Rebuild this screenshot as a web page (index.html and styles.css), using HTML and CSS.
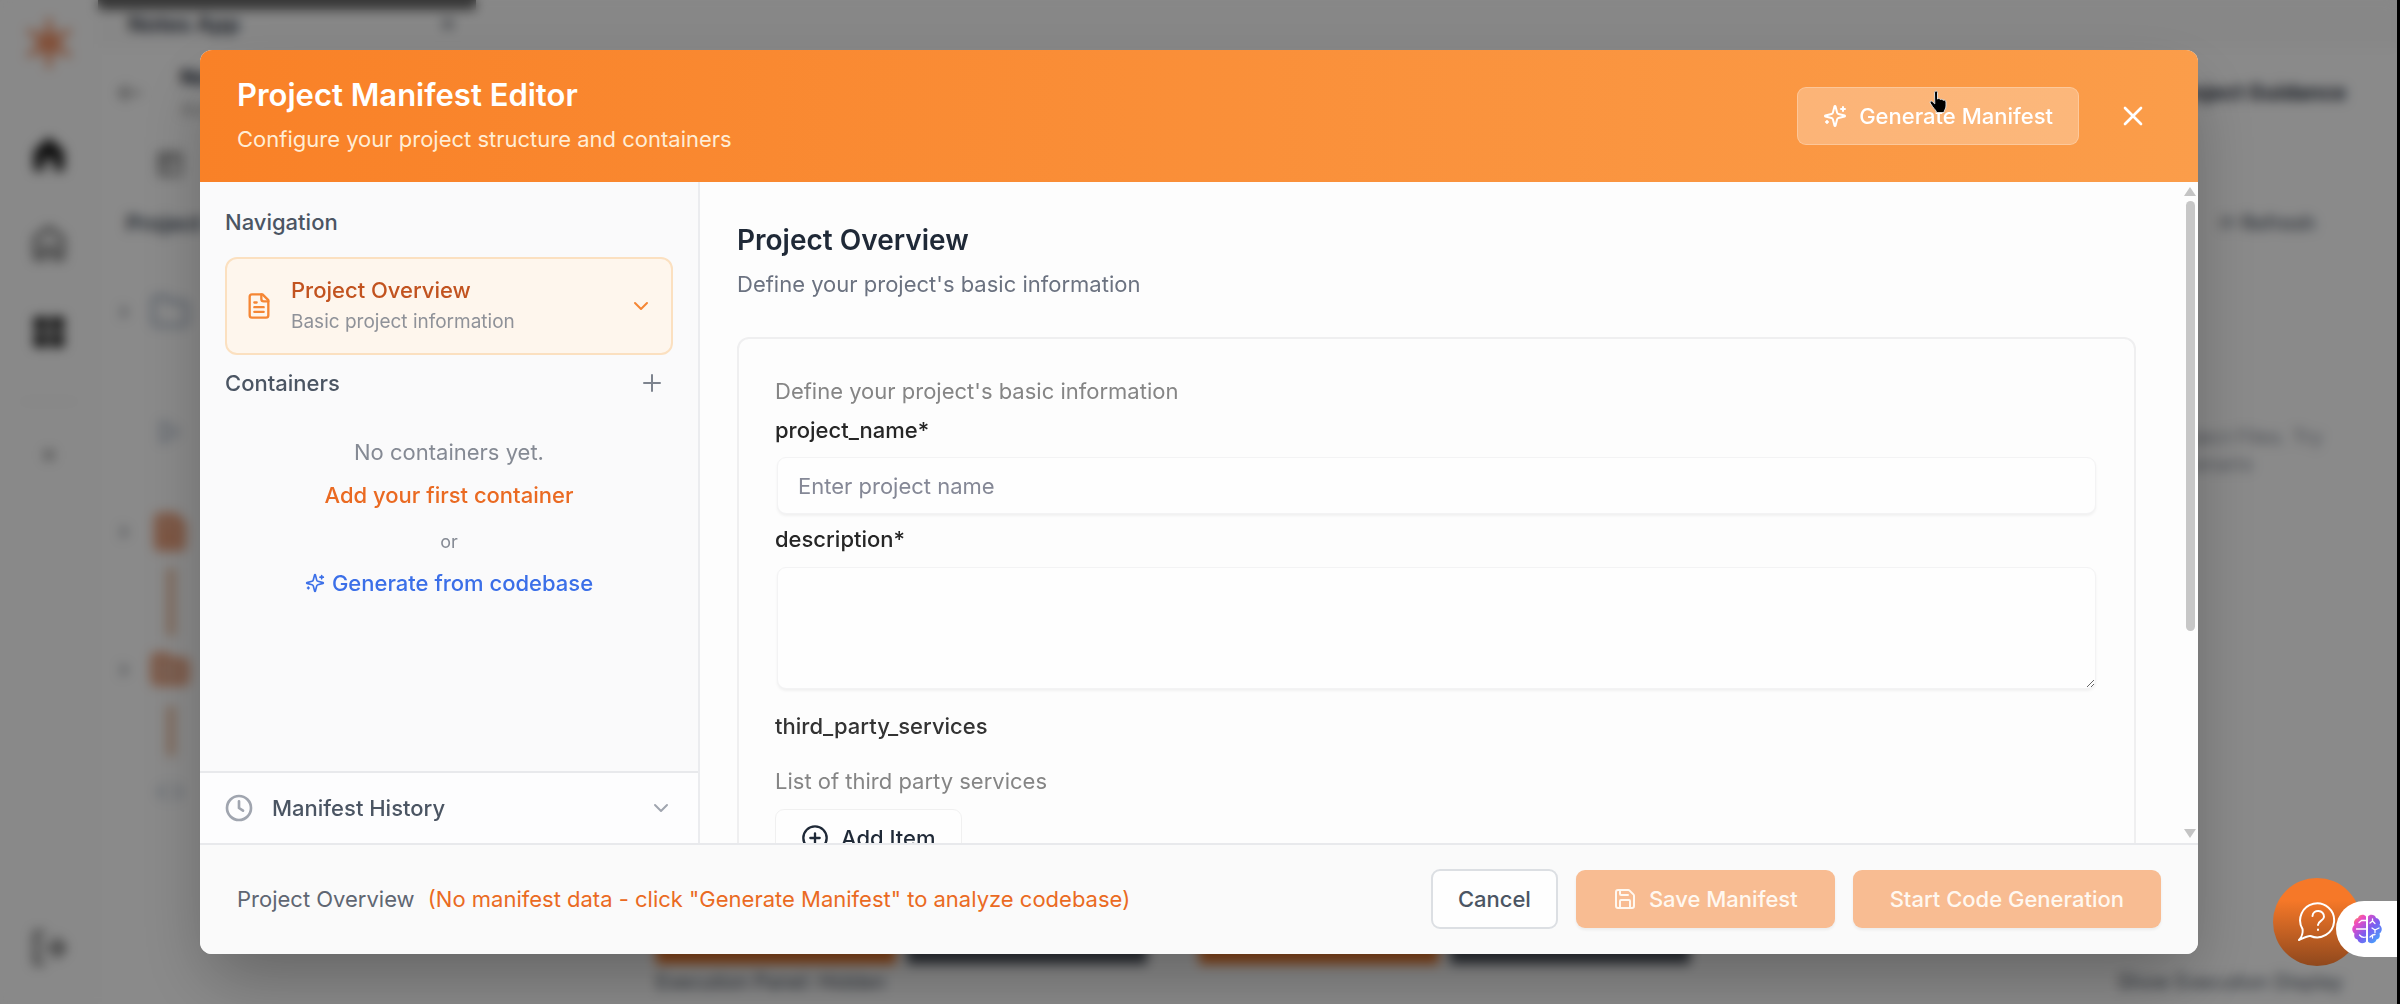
FILE: index.html
```html
<!DOCTYPE html>
<html lang="en">
<head>
<meta charset="utf-8">
<meta name="viewport" content="width=device-width, initial-scale=1">
<title>Project Manifest Editor</title>
<link rel="stylesheet" href="styles.css">
</head>
<body>
<svg class="sprite" aria-hidden="true">
  <symbol id="sparkles" viewBox="0 0 24 24"><path d="M9.937 15.5A2 2 0 0 0 8.5 14.063l-6.135-1.582a.5.5 0 0 1 0-.962L8.5 9.936A2 2 0 0 0 9.937 8.5l1.582-6.135a.5.5 0 0 1 .963 0L14.063 8.5A2 2 0 0 0 15.5 9.937l6.135 1.581a.5.5 0 0 1 0 .964L15.5 14.063a2 2 0 0 0-1.437 1.437l-1.582 6.135a.5.5 0 0 1-.963 0z"/><path d="M20 3v4M22 5h-4M4 17v2M5 18H3"/></symbol>
  <symbol id="chevron" viewBox="0 0 24 24"><path d="m6 9 6 6 6-6"/></symbol>
  <symbol id="chevron-right" viewBox="0 0 24 24"><path d="m9 6 6 6-6 6"/></symbol>
  <symbol id="cross" viewBox="0 0 24 24"><path d="M18 6 6 18M6 6l12 12"/></symbol>
  <symbol id="file" viewBox="0 0 24 24"><path d="M15 2H6a2 2 0 0 0-2 2v16a2 2 0 0 0 2 2h12a2 2 0 0 0 2-2V7Z"/><path d="M14 2v4a2 2 0 0 0 2 2h4M10 9H8M16 13H8M16 17H8"/></symbol>
  <symbol id="folder" viewBox="0 0 24 24"><path d="M20 20a2 2 0 0 0 2-2V8a2 2 0 0 0-2-2h-8l-2-3H4a2 2 0 0 0-2 2v13a2 2 0 0 0 2 2Z"/></symbol>
</svg>

<div class="app" aria-hidden="true">
  <nav class="rail">
    <svg class="rail-logo" viewBox="0 0 48 48"><path d="M24 4v40M7 14l34 20M41 14 7 34"/><circle cx="24" cy="24" r="8"/></svg>
    <svg class="rail-icon home" viewBox="0 0 24 24"><path d="M12 2 3 10v12h6v-7h6v7h6V10z"/></svg>
    <svg class="rail-icon line" viewBox="0 0 24 24"><path d="M4 21V9l8-6 8 6v12h-5v-6H9v6z"/></svg>
    <svg class="rail-icon tiles" viewBox="0 0 24 24"><path d="M3 3h8v8H3zM13 3h8v8h-8zM3 13h8v8H3zM13 13h8v8h-8z"/></svg>
    <div class="rail-rule"></div>
    <div class="rail-dot"></div>
    <svg class="rail-icon line exit" viewBox="0 0 24 24"><path d="M8 3H4v18h4M10 12h11M16 7l5 5-5 5"/></svg>
  </nav>
  <div class="work">
    <div class="tabs"><div class="tab"><span>Notes App</span><svg class="icon-20"><use href="#cross"/></svg></div></div>
    <div class="work-head">
      <svg class="icon-28 back" viewBox="0 0 24 24"><path d="M21 12H3M9 6l-6 6 6 6"/></svg>
      <div class="work-title"><b>Not</b><small>Act</small></div>
      <b class="guide">Project Guidance</b>
    </div>
    <div class="work-tools"><svg class="icon-28" viewBox="0 0 24 24"><path d="M3 3h18v18H3zM9 3v18M3 9h18"/></svg><span>T</span></div>
    <div class="work-sub"><b>Project</b><span class="refresh">⟳ Refresh</span></div>
    <div class="work-body">
      <div class="tree">
        <div class="node"><svg class="icon-20"><use href="#chevron-right"/></svg><svg class="icon-40 slate"><use href="#folder"/></svg></div>
        <div class="node leaf"><svg class="icon-28 slate" viewBox="0 0 24 24"><path d="M5 3v18l14-9z"/></svg></div>
        <div class="node"><svg class="icon-20"><use href="#chevron-right"/></svg><svg class="icon-40 flame"><use href="#file"/></svg></div>
        <div class="stem"></div>
        <div class="node"><svg class="icon-20"><use href="#chevron-right"/></svg><svg class="icon-40 flame"><use href="#folder"/></svg></div>
        <div class="stem short"></div>
        <div class="node leaf last"><svg class="icon-28 slate" viewBox="0 0 24 24"><path d="m8 6-6 6 6 6M16 6l6 6-6 6"/></svg></div>
      </div>
      <p class="empty">No guidance for Project Files. Try<br>running a scenario</p>
    </div>
    <div class="dock">
      <div class="bars"><i class="warm"></i><i></i><i class="warm second"></i><i></i></div>
      <div class="dock-row"><span>Execution Panel: Hidden</span><span>Show Execution Display</span></div>
    </div>
  </div>
</div>

<div class="overlay">
  <div class="modal" role="dialog" aria-modal="true" aria-labelledby="dialog-title">
    <header class="modal-head">
      <div>
        <h1 id="dialog-title">Project Manifest Editor</h1>
        <p>Configure your project structure and containers</p>
      </div>
      <div class="head-actions">
        <button class="btn btn-glass" type="button"><svg class="icon-24"><use href="#sparkles"/></svg>Generate Manifest
          <svg class="pointer" viewBox="0 0 20 24" aria-hidden="true"><path d="M5.500 2.500c0-2 3-2 3 0V9c1-.8 2.400-.5 2.800.5 1-.6 2.400-.2 2.700.8 1.200-.6 3 0 3 1.700v4c0 3-2 4-2 6.500H7.500c0-2-2.500-3.500-4-6L1.200 13c-.8-1.600 1-2.600 2.200-1.400l2.100 2z"/></svg>
        </button>
        <button class="close" type="button" aria-label="Close"><svg class="icon-32"><use href="#cross"/></svg></button>
      </div>
    </header>

    <div class="modal-body">
      <aside class="side">
        <div class="side-main">
          <h2>Navigation</h2>
          <button class="nav-card" type="button">
            <svg class="icon-28"><use href="#file"/></svg>
            <span class="nav-text"><strong>Project Overview</strong><small>Basic project information</small></span>
            <svg class="icon-24"><use href="#chevron"/></svg>
          </button>
          <div class="side-row">
            <h2>Containers</h2>
            <button class="plain" type="button" aria-label="Add container"><svg class="icon-24" viewBox="0 0 24 24"><path d="M4 12h16M12 4v16"/></svg></button>
          </div>
          <div class="none">
            <p>No containers yet.</p>
            <button class="link" type="button">Add your first container</button>
            <small>or</small>
            <button class="link blue" type="button"><svg class="icon-20"><use href="#sparkles"/></svg>Generate from codebase</button>
          </div>
        </div>
        <button class="history" type="button">
          <svg class="icon-32" viewBox="0 0 24 24"><circle cx="12" cy="12" r="9"/><path d="M12 7v5l3 2"/></svg>
          <span>Manifest History</span>
          <svg class="icon-24"><use href="#chevron"/></svg>
        </button>
      </aside>

      <main class="content">
        <form class="scroller">
          <h2>Project Overview</h2>
          <p class="lead">Define your project's basic information</p>
          <div class="card">
            <p class="hint">Define your project's basic information</p>
            <label for="name">project_name*</label>
            <input id="name" type="text" placeholder="Enter project name">
            <label for="desc">description*</label>
            <textarea id="desc"></textarea>
            <h3>third_party_services</h3>
            <p class="hint list">List of third party services</p>
            <button class="add" type="button"><svg class="icon-28" viewBox="0 0 24 24"><circle cx="12" cy="12" r="10"/><path d="M8 12h8M12 8v8"/></svg>Add Item</button>
          </div>
        </form>
        <div class="scrollbar" aria-hidden="true"><i class="up"></i><span><i class="thumb"></i></span><i class="down"></i></div>
      </main>
    </div>

    <footer class="modal-foot">
      <p>Project Overview <span>(No manifest data - click "Generate Manifest" to analyze codebase)</span></p>
      <div class="foot-actions">
        <button class="btn btn-outline" type="button">Cancel</button>
        <button class="btn btn-primary" type="button" disabled><svg class="icon-24" viewBox="0 0 24 24"><path d="M15.200 3a2 2 0 0 1 1.400.6l3.800 3.800a2 2 0 0 1 .6 1.400V19a2 2 0 0 1-2 2H5a2 2 0 0 1-2-2V5a2 2 0 0 1 2-2z"/><path d="M17 21v-7a1 1 0 0 0-1-1H8a1 1 0 0 0-1 1v7M7 3v4a1 1 0 0 0 1 1h7"/></svg>Save Manifest</button>
        <button class="btn btn-primary" type="button" disabled>Start Code Generation</button>
      </div>
    </footer>
  </div>
</div>

<button class="help" type="button" aria-label="Help"><svg viewBox="0 0 40 40"><path d="M2 38c3-3 4-8 3.500-11A17 17 0 1 1 13.500 34c-3-.5-7 2-11.500 4z"/><path d="M15.500 14c.5-7 12-6.500 11.500 1-.5 4-6 4-6 8M21 27.500v.5"/></svg></button>
<button class="assistant" type="button" aria-label="Assistant">
  <svg viewBox="0 0 30 30">
    <defs><linearGradient id="brain" x1="0" y1="0" x2="1" y2="1"><stop offset="0" stop-color="#ffb020"/><stop offset=".22" stop-color="#f04bc0"/><stop offset=".55" stop-color="#7a5cf0"/><stop offset="1" stop-color="#38b6ff"/></linearGradient></defs>
    <path fill="url(#brain)" d="M14 2.500C12.500 0 7 0 6 4 2.500 4.500 1 8.500 2.500 11-.5 13-.5 17.500 2.500 19.500 1.500 23 3 25 5.500 25.500 6.500 30 12.500 30 14 27.500zM16 2.500C17.500 0 23 0 24 4c3.500.5 5 4.500 3.500 7 3 2 3 6.500 0 8.500 1 3.500-.5 5.500-3 6-1 4.500-7 4.500-8.500 2z"/>
    <path fill="none" stroke="#fff" stroke-width="1.300" stroke-linecap="round" d="M14 6.500H9.500L7 8.500M14 15H4.500M14 23c-3 1-5 0-6.500-2M18 9l2.500-2L23 9.500M20.500 7V5M20 14l3 2 4-2M23 16v2.500M18 23l2.500-2 2.500-.5M20.500 21v3"/>
  </svg>
</button>
</body>
</html>
```
FILE: styles.css
```css
* { box-sizing: border-box; }
html { background: #000; }
body {
  margin: 0;
  height: 100vh;
  padding-right: 3px;
  overflow: hidden;
  font-family: Inter, "Liberation Sans", sans-serif;
  font-size: 22px;
  line-height: 32px;
  color: #1f2937;
}
h1, h2, h3, p { margin: 0; }
button { font: inherit; color: inherit; cursor: pointer; }
svg { flex: none; fill: none; stroke: currentColor; stroke-width: 2; stroke-linecap: round; stroke-linejoin: round; }
.sprite { position: absolute; width: 0; height: 0; }
.icon-20 { width: 20px; height: 20px; }
.icon-24 { width: 24px; height: 24px; }
.icon-28 { width: 28px; height: 28px; }
.icon-32 { width: 32px; height: 32px; }
.icon-40 { width: 40px; height: 40px; }

/* Workspace behind the dialog */
.app { display: flex; height: 100%; background: #fff; }
.rail { width: 98px; display: flex; flex-direction: column; align-items: center; padding: 16px 0 36px; background: #fdfdfd; }
.rail-logo { width: 54px; height: 54px; color: #f0946a; stroke-width: 5; margin-bottom: 64px; }
.rail-icon { width: 40px; height: 40px; margin-bottom: 49px; }
.home, .tiles { fill: #1a1a1a; stroke: none; }
.line { color: #777; stroke-width: 3; }
.rail-rule { width: 58px; height: 1px; background: #eee; }
.rail-dot { width: 10px; height: 10px; margin-top: 48px; background: #aaa; }
.exit { margin: auto 0 0; }
.work { flex: 1; display: flex; flex-direction: column; min-width: 0; }
.tabs { height: 48px; background: #fafafa; }
.tab { width: 378px; height: 48px; border-top: 10px solid #666; padding: 0 18px 10px 30px; display: flex; align-items: center; justify-content: space-between; font-weight: 600; }
.work-head { height: 90px; padding: 0 51px 0 18px; display: flex; align-items: center; gap: 36px; }
.back { color: #777; }
.work-title { display: flex; flex-direction: column; }
.work-title small { color: #999; }
.guide { margin-left: auto; font-size: 21px; }
.work-tools { height: 52px; padding-left: 58px; display: flex; align-items: center; gap: 24px; color: #555; }
.work-sub { height: 66px; padding: 0 82px 0 28px; display: flex; align-items: center; justify-content: space-between; color: #4b5563; }
.refresh { font-size: 20px; font-weight: 500; }
.work-body { flex: 1; min-height: 0; padding: 36px 72px 0 16px; display: flex; justify-content: space-between; }
.node { height: 40px; display: flex; align-items: center; gap: 16px; }
.leaf { padding-left: 42px; margin: 80px 0 60px; }
.last { margin: 16px 0 0; }
.slate { color: #94a3b8; }
.flame { color: #eb9870; fill: #e5b39a; stroke-width: 3; }
.stem { width: 8px; height: 68px; margin: 16px 0 14px 53px; background: #e8bc9f; }
.short { height: 50px; }
.empty { margin-top: 132px; width: 320px; font-size: 20px; line-height: 27px; color: #8b919c; text-align: center; }
.dock { padding: 0 54px 4px 558px; }
.bars { display: flex; gap: 11px; }
.bars i { width: 240px; height: 40px; background: #505660; }
.bars .warm { background: #f07a2c; }
.bars .second { margin-left: 41px; }
.dock-row { display: flex; justify-content: space-between; font-size: 20px; line-height: 36px; color: #4b5563; }

/* Dialog */
.overlay {
  position: fixed;
  inset: 0 3px 0 0;
  display: flex;
  padding: 50px 199px 50px 200px;
  background: rgba(0, 0, 0, .46);
  backdrop-filter: blur(6px);
}
.modal { flex: 1; min-width: 0; display: flex; flex-direction: column; overflow: hidden; border-radius: 12px; background: #fdfdfd; box-shadow: 0 30px 70px -10px rgba(0, 0, 0, .3); }
.modal-head { flex: none; height: 132px; padding: 0 37px; display: flex; align-items: center; justify-content: space-between; color: #fff; background: linear-gradient(90deg, #f98127, #fb9d4a); }
.modal-head h1 { font-size: 31px; line-height: 46px; font-weight: 600; }
.modal-head p { line-height: 42px; color: #ffedd5; }
.head-actions, .foot-actions { display: flex; align-items: center; gap: 18px; }
.head-actions { gap: 26px; }
.btn { height: 58px; padding: 0 37px; display: flex; align-items: center; gap: 12px; border: 0; border-radius: 9px; font-weight: 500; }
.btn-glass { position: relative; padding: 0 25px; border: 1px solid rgba(255, 255, 255, .25); background: rgba(255, 255, 255, .28); }
.pointer { position: absolute; left: 131px; top: 2px; width: 20px; height: 24px; fill: #000; stroke: #ddd; stroke-width: 1; }
.close { width: 56px; height: 56px; padding: 0; display: grid; place-items: center; border: 0; background: none; }

.modal-body { flex: 1; min-height: 0; display: flex; }
.side { flex: none; width: 500px; display: flex; flex-direction: column; border-right: 2px solid #ebecef; background: #fafafb; color: #4b5563; }
.side-main { flex: 1; padding: 24px 25px; }
.side h2 { font-size: 22px; line-height: 32px; font-weight: 500; }
.nav-card { width: 100%; height: 98px; margin: 19px 0 12px; padding: 0 18px; display: flex; align-items: center; gap: 18px; border: 2px solid #fbe0c0; border-radius: 12px; background: #fef6ed; color: #f58634; text-align: left; }
.nav-text { flex: 1; display: flex; flex-direction: column; }
.nav-text strong { font-weight: 500; color: #c2531f; }
.nav-text small { font-size: 19px; color: #8f9299; }
.side-row { display: flex; justify-content: space-between; align-items: center; padding-right: 9px; }
.plain { padding: 0; border: 0; background: none; height: 24px; color: #7d838e; }
.none { display: flex; flex-direction: column; align-items: center; padding-top: 37px; color: #858a94; }
.none small { margin: 16px 0 10px; font-size: 18px; line-height: 30px; }
.link { display: flex; align-items: center; gap: 7px; padding: 0; border: 0; background: none; color: #ea6a22; font-weight: 500; }
.none p + .link { margin-top: 11px; }
.none .blue { color: #3b6fe8; }
.history { height: 72px; padding: 0 25px 0 23px; display: flex; align-items: center; gap: 17px; border: 0; border-top: 2px solid #e8e9ec; background: #fdfdfe; font-weight: 500; text-align: left; }
.history span { flex: 1; }
.history svg { color: #a0a5af; }

.content { flex: 1; min-width: 0; display: flex; }
.scroller { flex: 1; min-width: 0; padding: 38px 46px 0 37px; overflow: hidden; }
.scroller h2 { font-size: 28px; line-height: 40px; font-weight: 600; }
.lead { margin: 8px 0 37px; color: #6b7280; }
.card { height: 760px; padding: 36px; border: 2px solid #efeff0; border-radius: 12px; }
.hint { color: #858585; }
.card label { display: block; margin: 7px 0 11px; font-weight: 500; color: #262626; }
.card input, .card textarea { display: block; width: calc(100% - 4px); margin: 0 2px; padding: 0 20px; border: 1px solid #f3f3f4; border-radius: 9px; outline: 0; background: #fefefe; font: inherit; box-shadow: 0 2px 3px rgba(0, 0, 0, .05); }
.card input { height: 57px; }
.card input::placeholder { color: #858896; }
.card label + textarea { height: 122px; resize: vertical; }
.card input + label { margin: 9px 0 12px; }
.card h3 { margin: 21px 0 23px; font-size: 22px; line-height: 32px; font-weight: 500; color: #333; }
.add { height: 57px; margin-top: 12px; padding: 0 25px; display: flex; align-items: center; gap: 12px; border: 1px solid #f0f0f0; border-radius: 9px; background: #fefefe; font-weight: 500; }
.scrollbar { flex: none; width: 16px; padding: 5px 0; display: flex; flex-direction: column; align-items: center; }
.scrollbar i { display: block; }
.scrollbar span { flex: 1; padding: 5px 0; }
.thumb { width: 9px; height: 69%; border-radius: 5px; background: #c7c7c7; }
.up, .down { border: 6px solid transparent; }
.up { border-bottom: 9px solid #c4c4c4; border-top: 0; }
.down { border-top: 9px solid #c4c4c4; border-bottom: 0; }

.modal-foot { flex: none; height: 111px; padding: 0 37px 2px; display: flex; align-items: center; justify-content: space-between; border-top: 2px solid #e8e9ec; background: #fafafa; color: #5f6672; }
.modal-foot span { margin-left: 7px; color: #ea6a22; }
.btn-outline { padding: 0 25px; height: 60px; border: 2px solid #dcdfe3; background: #fefefe; color: #4b5563; }
.btn-primary { background: #f8bc92; color: #fff8f0; box-shadow: 0 2px 3px rgba(0, 0, 0, .06); }

/* Floating launchers */
.help { position: fixed; right: 39px; bottom: 38px; width: 88px; height: 88px; padding: 0; display: grid; place-items: center; border: 0; border-radius: 50%; color: #fff; background: linear-gradient(#f67828 25%, #8f481d); }
.help svg { width: 40px; height: 40px; stroke-width: 2; }
.assistant { position: fixed; right: 3px; bottom: 47px; width: 61px; height: 56px; padding: 0; display: grid; place-items: center; border: 0; border-radius: 28px 0 0 28px; background: #fff; }
.assistant svg { width: 30px; height: 30px; stroke: none; }
```
